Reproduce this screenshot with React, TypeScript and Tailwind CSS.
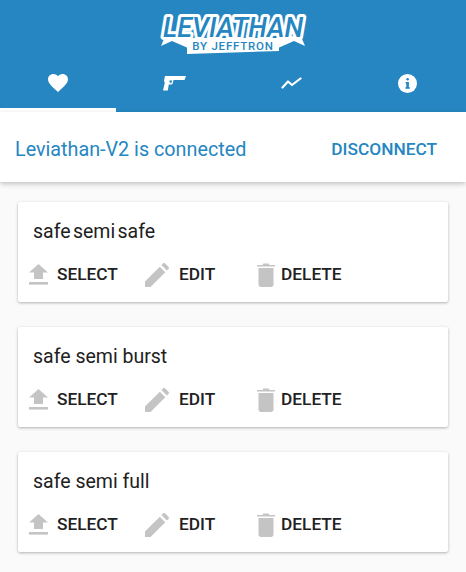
import React from "react";

const presets = [
  { name: "safe semi safe", tight: true },
  { name: "safe semi burst", tight: false },
  { name: "safe semi full", tight: false },
];

const tabIconClass = "flex-1 flex items-center justify-center h-full pb-[6px]";

const Logo = () => (
  <svg width="150" height="44" viewBox="0 0 150 44" className="block">
    <path d="M30 29 L8 23 L3 35 L14 30 L30 37 Z" fill="#fff" />
    <path d="M120 29 L142 23 L147 35 L136 30 L120 37 Z" fill="#fff" />
    <path d="M29 27 H121 V40 L29 43 Z" fill="#fff" />
    <text
      x="75"
      y="26"
      textAnchor="middle"
      fontFamily="Roboto, sans-serif"
      fontWeight="500"
      fontStyle="italic"
      fontSize="27"
      textLength="140"
      lengthAdjust="spacingAndGlyphs"
      fill="#2586c1"
      stroke="#fff"
      strokeWidth="6"
      strokeLinejoin="round"
      paintOrder="stroke"
    >
      LEVIATHAN
    </text>
    <text
      x="75"
      y="39"
      textAnchor="middle"
      fontFamily="Roboto, sans-serif"
      fontWeight="500"
      fontSize="11.5"
      letterSpacing="0.8"
      fill="#2586c1"
    >
      BY JEFFTRON
    </text>
  </svg>
);

const Heart = () => (
  <svg width="20" height="18" viewBox="0 0 20 18" fill="#fff">
    <path d="M10 18 L8.6 16.7 C3.4 12.1 0 9 0 5.3 C0 2.3 2.3 0 5.3 0 C7 0 8.9 .8 10 2.2 C11.1 .8 13 0 14.7 0 C17.7 0 20 2.3 20 5.3 C20 9 16.6 12.1 11.4 16.7 Z" />
  </svg>
);

const Gun = () => (
  <svg width="23" height="15" viewBox="0 0 23 15" fill="#fff">
    <path d="M2 0 H23 L21.5 4 H11 C10.6 4 10.4 4.3 10.3 4.7 L9.8 7 C9.6 8 8.8 8.6 7.8 8.6 H5.8 L4.8 14.6 H0 L1.8 6.6 C1 5.5 .9 4.8 1.2 3.8 Z" />
    <path d="M6.3 4.4 H9 L8.7 6.8 H6.8 Z" fill="#2586c1" />
  </svg>
);

const Trend = () => (
  <svg width="21" height="12" viewBox="0 0 21 12" fill="none" stroke="#fff" strokeWidth="2.2" strokeLinecap="round" strokeLinejoin="round">
    <path d="M1.5 10.5 L7 4.5 L11 8 L19.5 1.5" />
  </svg>
);

const Info = () => (
  <svg width="19" height="19" viewBox="0 0 19 19">
    <circle cx="9.5" cy="9.5" r="9.5" fill="#fff" />
    <rect x="8.3" y="4" width="2.6" height="2.6" rx="1.3" fill="#2586c1" />
    <path d="M7.6 8 H10.9 V13.2 H11.8 V14.8 H7.4 V13.2 H8.3 V9.6 H7.6 Z" fill="#2586c1" />
  </svg>
);

const SelectIcon = () => (
  <svg width="19" height="21" viewBox="0 0 19 21" fill="#c4c4c4">
    <path d="M9.5 0 L19 8.5 H14 V15 H5 V8.5 H0 Z" />
    <rect x="0" y="18" width="19" height="2.6" />
  </svg>
);

const EditIcon = () => (
  <svg width="24" height="24" viewBox="0 0 24 24" fill="#c4c4c4">
    <path d="M0 24 V18.5 L14.8 3.7 L20.3 9.2 L5.5 24 Z" />
    <path d="M16.4 2.1 L18 .5 C18.6 -.1 19.6 -.1 20.2 .5 L23.5 3.8 C24.1 4.4 24.1 5.4 23.5 6 L21.9 7.6 Z" />
  </svg>
);

const TrashIcon = () => (
  <svg width="18" height="24" viewBox="0 0 18 24" fill="#c4c4c4">
    <path d="M1.5 5 H16.5 V21.5 C16.5 23 15.4 24 14 24 H4 C2.6 24 1.5 23 1.5 21.5 Z" />
    <path d="M0 2 H5.5 L6.5 .5 H11.5 L12.5 2 H18 V3.5 H0 Z" />
  </svg>
);

const App = () => {
  return (
    <div
      className="w-[466px] h-[572px] overflow-hidden bg-[#fafafa]"
      style={{ fontFamily: "Roboto, sans-serif" }}
    >
      <div className="bg-[#2586c1] h-[112px] flex flex-col relative">
        <div className="h-[60px] flex justify-center items-start pt-[11px]">
          <Logo />
        </div>
        <div className="flex h-[52px]">
          <div className={tabIconClass}>
            <Heart />
          </div>
          <div className={tabIconClass}>
            <Gun />
          </div>
          <div className={tabIconClass}>
            <Trend />
          </div>
          <div className={tabIconClass}>
            <Info />
          </div>
        </div>
        <div className="absolute left-0 bottom-0 w-[116px] h-[4px] bg-white" />
      </div>
      <div className="bg-white h-[70px] flex items-center justify-between pl-[15px] pr-[29px] pt-[6px] shadow-[0_2px_5px_rgba(0,0,0,0.22)] relative">
        <span className="text-[19.75px] text-[#2586c1]">Leviathan-V2 is connected</span>
        <span className="text-[17.3px] font-medium text-[#2586c1]">DISCONNECT</span>
      </div>
      <div className="flex flex-col gap-[25px] pt-[20px] px-[18px]">
        {presets.map((p) => (
          <div
            key={p.name}
            className="bg-white h-[100px] rounded-[2px] shadow-[0_1px_3px_rgba(0,0,0,0.3)] flex flex-col"
          >
            <div
              className={`pl-[15px] pt-[17px] text-[19.5px] leading-[26px] text-[#212121] ${
                p.tight ? "[word-spacing:-2.5px]" : ""
              }`}
            >
              {p.name}
            </div>
            <div className="flex items-center pl-[11px] mt-[17px] text-[17.3px] font-medium text-[#212121]">
              <div className="flex items-center w-[116px]">
                <SelectIcon />
                <span className="ml-[9px]">SELECT</span>
              </div>
              <div className="flex items-center w-[112px]">
                <EditIcon />
                <span className="ml-[10px]">EDIT</span>
              </div>
              <div className="flex items-center">
                <TrashIcon />
                <span className="ml-[6px]">DELETE</span>
              </div>
            </div>
          </div>
        ))}
      </div>
    </div>
  );
};

export default App;
